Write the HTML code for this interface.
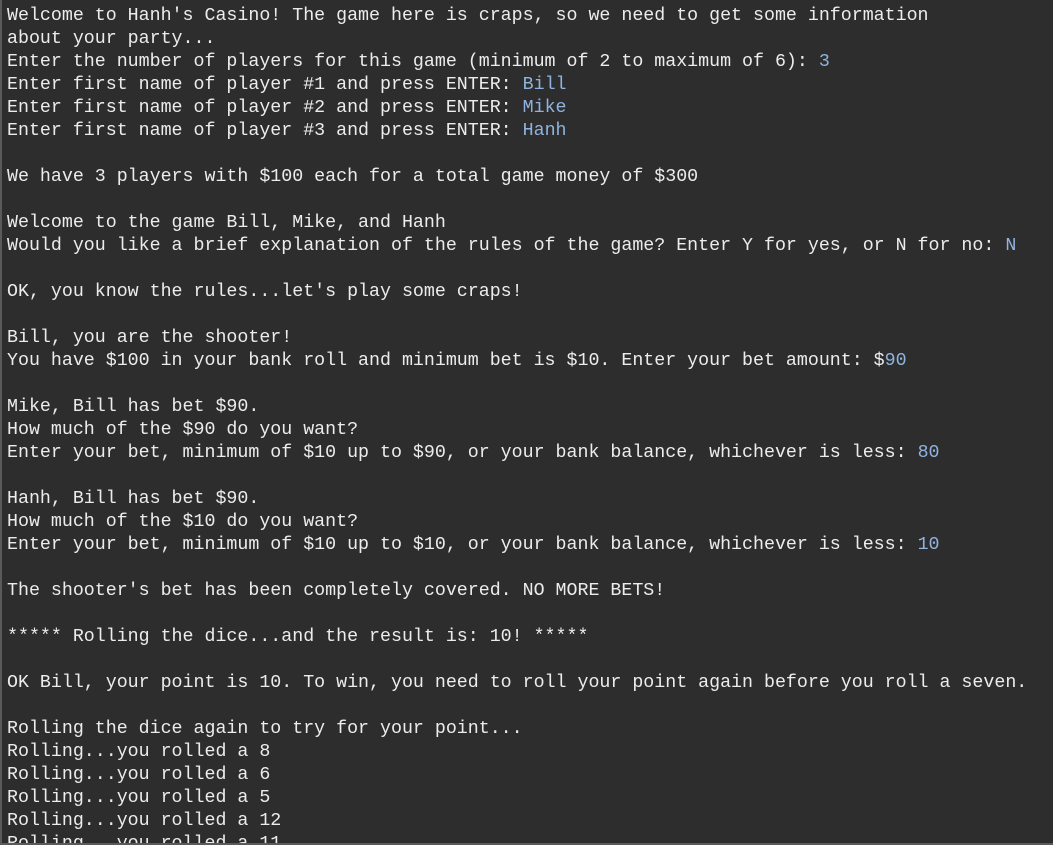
<!DOCTYPE html>
<html><head><meta charset="utf-8"><style>
html,body{margin:0;padding:0;width:1053px;height:845px;overflow:hidden;}
body{background:#2d2d2d;position:relative;}
.b{position:absolute;left:0;top:0;width:2px;height:845px;background:#5a5a5a;}
.bb{position:absolute;left:0;top:843px;width:1053px;height:2px;background:#5a5a5a;}
pre{margin:0;position:absolute;left:7px;top:5px;font-family:"Liberation Mono",monospace;font-size:18.3px;line-height:23px;color:#ececec;white-space:pre;}
i{font-style:normal;color:#8fb3de;}
</style></head><body>
<div class="b"></div>
<pre>Welcome to Hanh's Casino! The game here is craps, so we need to get some information
about your party...
Enter the number of players for this game (minimum of 2 to maximum of 6): <i>3</i>
Enter first name of player #1 and press ENTER: <i>Bill</i>
Enter first name of player #2 and press ENTER: <i>Mike</i>
Enter first name of player #3 and press ENTER: <i>Hanh</i>

We have 3 players with $100 each for a total game money of $300

Welcome to the game Bill, Mike, and Hanh
Would you like a brief explanation of the rules of the game? Enter Y for yes, or N for no: <i>N</i>

OK, you know the rules...let's play some craps!

Bill, you are the shooter!
You have $100 in your bank roll and minimum bet is $10. Enter your bet amount: $<i>90</i>

Mike, Bill has bet $90.
How much of the $90 do you want?
Enter your bet, minimum of $10 up to $90, or your bank balance, whichever is less: <i>80</i>

Hanh, Bill has bet $90.
How much of the $10 do you want?
Enter your bet, minimum of $10 up to $10, or your bank balance, whichever is less: <i>10</i>

The shooter's bet has been completely covered. NO MORE BETS!

***** Rolling the dice...and the result is: 10! *****

OK Bill, your point is 10. To win, you need to roll your point again before you roll a seven.

Rolling the dice again to try for your point...
Rolling...you rolled a 8
Rolling...you rolled a 6
Rolling...you rolled a 5
Rolling...you rolled a 12
Rolling...you rolled a 11</pre>
<div class="bb"></div>
</body></html>
